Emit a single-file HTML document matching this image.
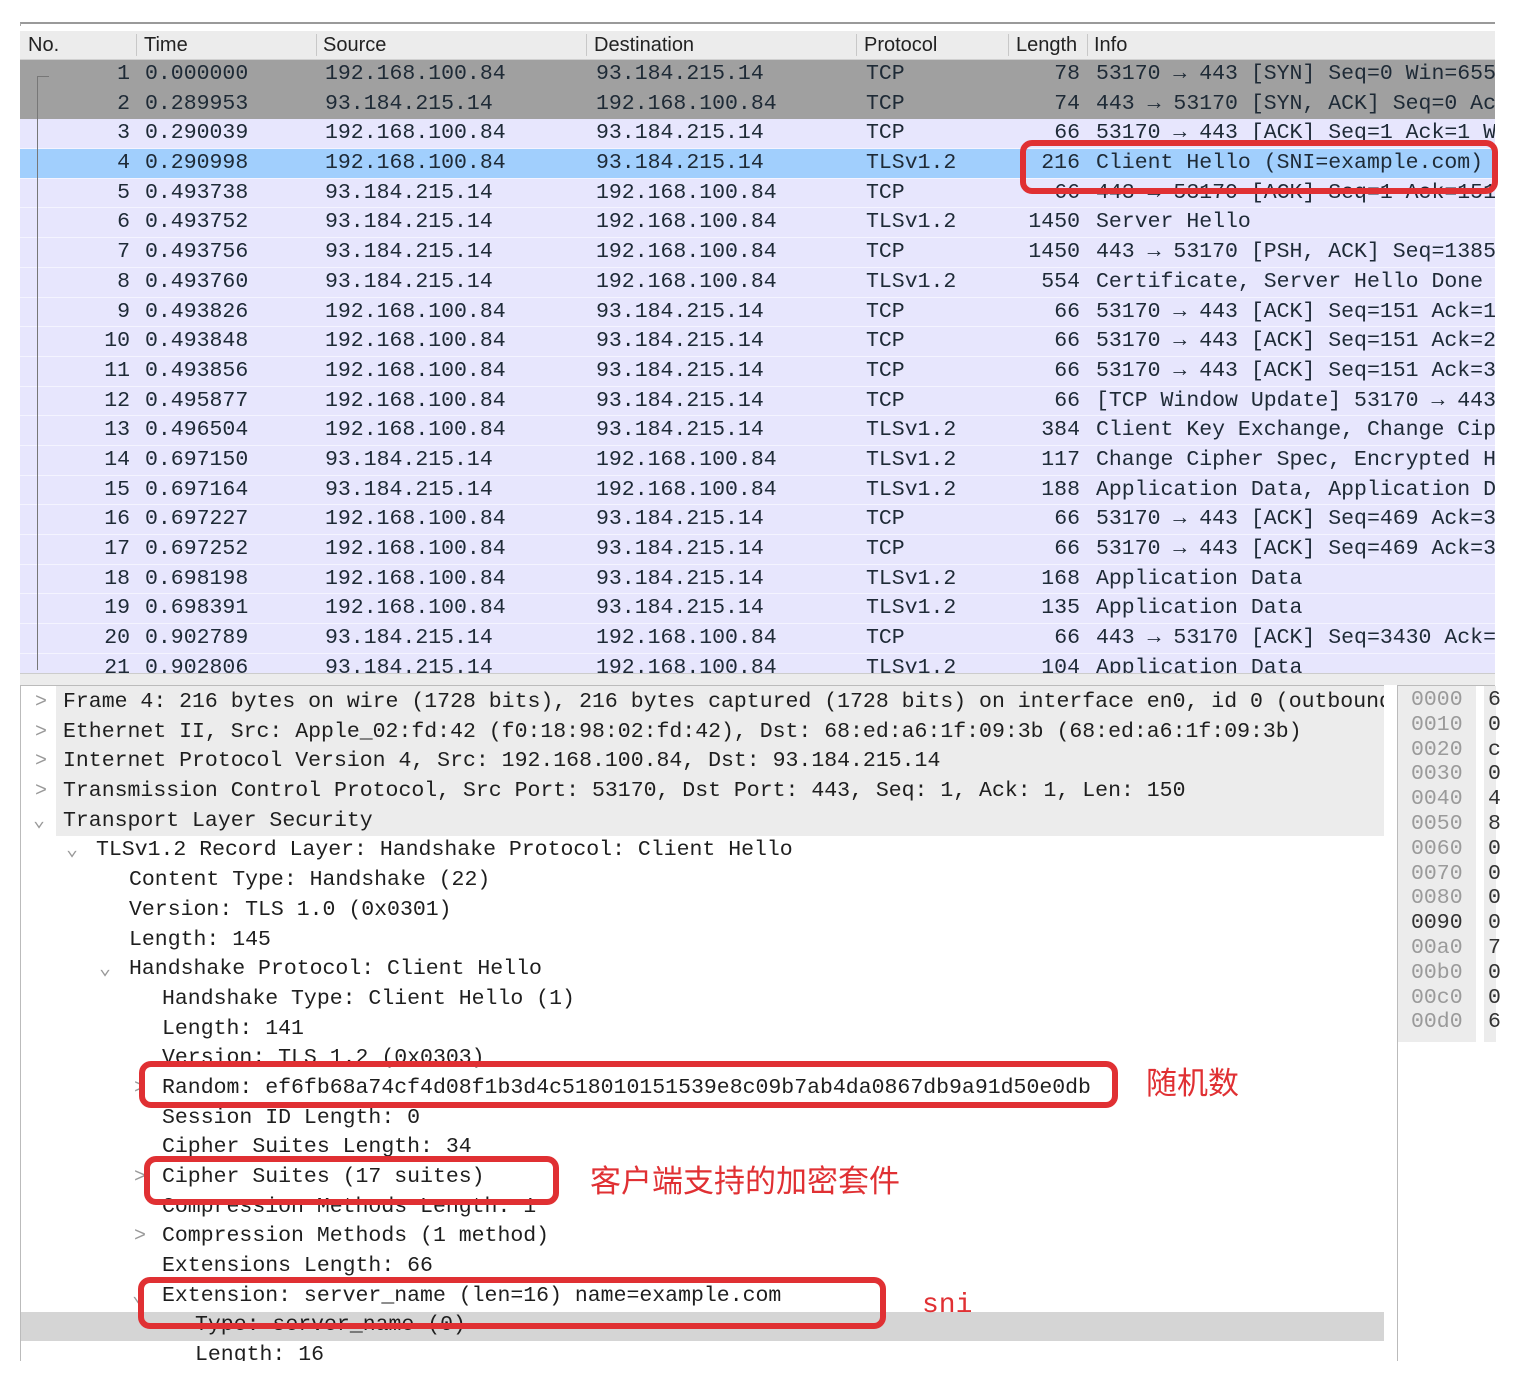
<!DOCTYPE html>
<html><head><meta charset="utf-8"><style>
*{margin:0;padding:0;box-sizing:border-box}
body{width:1516px;height:1382px;background:#fff;position:relative;overflow:hidden;font-family:"Liberation Mono","DejaVu Sans Mono",monospace;color:#1e2a36}
.top{position:absolute;left:20px;top:22px;width:1475px;height:4px;border-top:2px solid #9a9a9a;border-left:1px solid #aaa}
.hdr{position:absolute;left:20px;top:31px;width:1475px;height:29px;background:#ececec;font-family:"Liberation Sans",sans-serif;font-size:20px;color:#222;border-bottom:1px solid #d0d0d0}
.hdr span{position:absolute;top:3px}
.hdr i{position:absolute;top:3px;width:1px;height:22px;background:#c8c8c8}
.list{position:absolute;left:20px;top:60px;width:1475px;height:613px;overflow:hidden;font-size:21.5px}
.r{position:relative;height:29.7px;line-height:29.7px;white-space:pre;background:#e7e6fd;border-bottom:1px solid #f4f4ff}
.r.g{background:#a0a0a0;border-bottom:none}
.r.s{background:#a1cffd}
.r span{position:absolute;top:0}
.c0{left:0;width:110px;text-align:right}
.c1{left:125px}.c2{left:305px}.c3{left:576px}.c4{left:846px}
.c5{left:990px;width:70px;text-align:right}.c6{left:1076px}
.vline{position:absolute;left:37px;top:76px;width:1px;height:594px;background:#777}
.vtick{position:absolute;left:37px;top:76px;width:12px;height:1px;background:#777}
.sep{position:absolute;left:20px;top:673px;width:1475px;height:12px;background:#ececec;border-top:1px solid #ccc}
.det{position:absolute;left:20px;top:685px;width:1364px;height:676px;border-left:1px solid #bbb;border-top:1px solid #bbb;overflow:hidden;font-size:21.5px}
.rows{position:absolute;left:0;top:2px;width:100%}
.greybg{position:absolute;left:35px;top:0;width:1329px;height:150px;background:#ececec}
.selbg{position:absolute;left:0;top:626px;width:1364px;height:29px;background:#d5d5d5}
.d{position:relative;height:29.7px;line-height:29.7px;white-space:pre;color:#1e1e1e}
.d b{position:absolute;top:0;font-weight:normal;color:#999;font-size:20px}
.hex{position:absolute;left:1397px;top:685px;width:98px;height:676px;border-left:1px solid #bbb;border-top:1px solid #bbb;font-size:21.5px}
.hex .off{position:absolute;left:0;top:0;width:78px;height:356px;background:#ececec}
.hex .val{position:absolute;left:86px;top:0;width:12px;height:356px;background:#ececec}
.hex div.l{position:relative;height:24.8px;line-height:24.8px;color:#9a9a9a;padding-left:13px;white-space:pre}
.hex div.l span{position:absolute;left:90px;color:#333}
.box{position:absolute;border:6px solid #e03033;border-radius:12px}
.ann{position:absolute;color:#e03033;font-family:"Liberation Sans","Noto Sans CJK SC",sans-serif;font-size:31px;line-height:1}
</style></head><body>
<div class="top"></div>
<div class="hdr">
<span style="left:8px">No.</span><i style="left:116px"></i>
<span style="left:124px">Time</span><i style="left:296px"></i>
<span style="left:303px">Source</span><i style="left:566px"></i>
<span style="left:574px">Destination</span><i style="left:836px"></i>
<span style="left:844px">Protocol</span><i style="left:988px"></i>
<span style="left:996px;width:64px;overflow:hidden;white-space:nowrap">Length</span><i style="left:1067px"></i>
<span style="left:1074px">Info</span>
</div>
<div class="list">
<div class="r g"><span class="c0">1</span><span class="c1">0.000000</span><span class="c2">192.168.100.84</span><span class="c3">93.184.215.14</span><span class="c4">TCP</span><span class="c5">78</span><span class="c6">53170 → 443 [SYN] Seq=0 Win=65535</span></div>
<div class="r g"><span class="c0">2</span><span class="c1">0.289953</span><span class="c2">93.184.215.14</span><span class="c3">192.168.100.84</span><span class="c4">TCP</span><span class="c5">74</span><span class="c6">443 → 53170 [SYN, ACK] Seq=0 Ack=1</span></div>
<div class="r"><span class="c0">3</span><span class="c1">0.290039</span><span class="c2">192.168.100.84</span><span class="c3">93.184.215.14</span><span class="c4">TCP</span><span class="c5">66</span><span class="c6">53170 → 443 [ACK] Seq=1 Ack=1 Win</span></div>
<div class="r s"><span class="c0">4</span><span class="c1">0.290998</span><span class="c2">192.168.100.84</span><span class="c3">93.184.215.14</span><span class="c4">TLSv1.2</span><span class="c5">216</span><span class="c6">Client Hello (SNI=example.com)</span></div>
<div class="r"><span class="c0">5</span><span class="c1">0.493738</span><span class="c2">93.184.215.14</span><span class="c3">192.168.100.84</span><span class="c4">TCP</span><span class="c5">66</span><span class="c6">443 → 53170 [ACK] Seq=1 Ack=151</span></div>
<div class="r"><span class="c0">6</span><span class="c1">0.493752</span><span class="c2">93.184.215.14</span><span class="c3">192.168.100.84</span><span class="c4">TLSv1.2</span><span class="c5">1450</span><span class="c6">Server Hello</span></div>
<div class="r"><span class="c0">7</span><span class="c1">0.493756</span><span class="c2">93.184.215.14</span><span class="c3">192.168.100.84</span><span class="c4">TCP</span><span class="c5">1450</span><span class="c6">443 → 53170 [PSH, ACK] Seq=1385</span></div>
<div class="r"><span class="c0">8</span><span class="c1">0.493760</span><span class="c2">93.184.215.14</span><span class="c3">192.168.100.84</span><span class="c4">TLSv1.2</span><span class="c5">554</span><span class="c6">Certificate, Server Hello Done</span></div>
<div class="r"><span class="c0">9</span><span class="c1">0.493826</span><span class="c2">192.168.100.84</span><span class="c3">93.184.215.14</span><span class="c4">TCP</span><span class="c5">66</span><span class="c6">53170 → 443 [ACK] Seq=151 Ack=1</span></div>
<div class="r"><span class="c0">10</span><span class="c1">0.493848</span><span class="c2">192.168.100.84</span><span class="c3">93.184.215.14</span><span class="c4">TCP</span><span class="c5">66</span><span class="c6">53170 → 443 [ACK] Seq=151 Ack=2</span></div>
<div class="r"><span class="c0">11</span><span class="c1">0.493856</span><span class="c2">192.168.100.84</span><span class="c3">93.184.215.14</span><span class="c4">TCP</span><span class="c5">66</span><span class="c6">53170 → 443 [ACK] Seq=151 Ack=3</span></div>
<div class="r"><span class="c0">12</span><span class="c1">0.495877</span><span class="c2">192.168.100.84</span><span class="c3">93.184.215.14</span><span class="c4">TCP</span><span class="c5">66</span><span class="c6">[TCP Window Update] 53170 → 443</span></div>
<div class="r"><span class="c0">13</span><span class="c1">0.496504</span><span class="c2">192.168.100.84</span><span class="c3">93.184.215.14</span><span class="c4">TLSv1.2</span><span class="c5">384</span><span class="c6">Client Key Exchange, Change Cip</span></div>
<div class="r"><span class="c0">14</span><span class="c1">0.697150</span><span class="c2">93.184.215.14</span><span class="c3">192.168.100.84</span><span class="c4">TLSv1.2</span><span class="c5">117</span><span class="c6">Change Cipher Spec, Encrypted H</span></div>
<div class="r"><span class="c0">15</span><span class="c1">0.697164</span><span class="c2">93.184.215.14</span><span class="c3">192.168.100.84</span><span class="c4">TLSv1.2</span><span class="c5">188</span><span class="c6">Application Data, Application D</span></div>
<div class="r"><span class="c0">16</span><span class="c1">0.697227</span><span class="c2">192.168.100.84</span><span class="c3">93.184.215.14</span><span class="c4">TCP</span><span class="c5">66</span><span class="c6">53170 → 443 [ACK] Seq=469 Ack=3</span></div>
<div class="r"><span class="c0">17</span><span class="c1">0.697252</span><span class="c2">192.168.100.84</span><span class="c3">93.184.215.14</span><span class="c4">TCP</span><span class="c5">66</span><span class="c6">53170 → 443 [ACK] Seq=469 Ack=3</span></div>
<div class="r"><span class="c0">18</span><span class="c1">0.698198</span><span class="c2">192.168.100.84</span><span class="c3">93.184.215.14</span><span class="c4">TLSv1.2</span><span class="c5">168</span><span class="c6">Application Data</span></div>
<div class="r"><span class="c0">19</span><span class="c1">0.698391</span><span class="c2">192.168.100.84</span><span class="c3">93.184.215.14</span><span class="c4">TLSv1.2</span><span class="c5">135</span><span class="c6">Application Data</span></div>
<div class="r"><span class="c0">20</span><span class="c1">0.902789</span><span class="c2">93.184.215.14</span><span class="c3">192.168.100.84</span><span class="c4">TCP</span><span class="c5">66</span><span class="c6">443 → 53170 [ACK] Seq=3430 Ack=</span></div>
<div class="r"><span class="c0">21</span><span class="c1">0.902806</span><span class="c2">93.184.215.14</span><span class="c3">192.168.100.84</span><span class="c4">TLSv1.2</span><span class="c5">104</span><span class="c6">Application Data</span></div>
</div>
<div class="vline"></div><div class="vtick"></div>
<div class="sep"></div>
<div class="det">
<div class="greybg"></div>
<div class="selbg"></div>
<div class="rows">
<div class="d"><b style="left:14px">&gt;</b><span style="position:absolute;left:42px">Frame 4: 216 bytes on wire (1728 bits), 216 bytes captured (1728 bits) on interface en0, id 0 (outbound)</span></div>
<div class="d"><b style="left:14px">&gt;</b><span style="position:absolute;left:42px">Ethernet II, Src: Apple_02:fd:42 (f0:18:98:02:fd:42), Dst: 68:ed:a6:1f:09:3b (68:ed:a6:1f:09:3b)</span></div>
<div class="d"><b style="left:14px">&gt;</b><span style="position:absolute;left:42px">Internet Protocol Version 4, Src: 192.168.100.84, Dst: 93.184.215.14</span></div>
<div class="d"><b style="left:14px">&gt;</b><span style="position:absolute;left:42px">Transmission Control Protocol, Src Port: 53170, Dst Port: 443, Seq: 1, Ack: 1, Len: 150</span></div>
<div class="d"><b style="left:12px">⌄</b><span style="position:absolute;left:42px">Transport Layer Security</span></div>
<div class="d"><b style="left:45px">⌄</b><span style="position:absolute;left:75px">TLSv1.2 Record Layer: Handshake Protocol: Client Hello</span></div>
<div class="d"><span style="position:absolute;left:108px">Content Type: Handshake (22)</span></div>
<div class="d"><span style="position:absolute;left:108px">Version: TLS 1.0 (0x0301)</span></div>
<div class="d"><span style="position:absolute;left:108px">Length: 145</span></div>
<div class="d"><b style="left:78px">⌄</b><span style="position:absolute;left:108px">Handshake Protocol: Client Hello</span></div>
<div class="d"><span style="position:absolute;left:141px">Handshake Type: Client Hello (1)</span></div>
<div class="d"><span style="position:absolute;left:141px">Length: 141</span></div>
<div class="d"><span style="position:absolute;left:141px">Version: TLS 1.2 (0x0303)</span></div>
<div class="d"><b style="left:113px">&gt;</b><span style="position:absolute;left:141px">Random: ef6fb68a74cf4d08f1b3d4c518010151539e8c09b7ab4da0867db9a91d50e0db</span></div>
<div class="d"><span style="position:absolute;left:141px">Session ID Length: 0</span></div>
<div class="d"><span style="position:absolute;left:141px">Cipher Suites Length: 34</span></div>
<div class="d"><b style="left:113px">&gt;</b><span style="position:absolute;left:141px">Cipher Suites (17 suites)</span></div>
<div class="d"><span style="position:absolute;left:141px">Compression Methods Length: 1</span></div>
<div class="d"><b style="left:113px">&gt;</b><span style="position:absolute;left:141px">Compression Methods (1 method)</span></div>
<div class="d"><span style="position:absolute;left:141px">Extensions Length: 66</span></div>
<div class="d"><b style="left:111px">⌄</b><span style="position:absolute;left:141px">Extension: server_name (len=16) name=example.com</span></div>
<div class="d"><span style="position:absolute;left:174px">Type: server_name (0)</span></div>
<div class="d"><span style="position:absolute;left:174px">Length: 16</span></div>
</div>
</div>
<div class="hex">
<div class="off"></div><div class="val"></div>
<div style="position:absolute;left:0;top:2px;width:98px">
<div class="l">0000<span>6</span></div><div class="l">0010<span>0</span></div><div class="l">0020<span>c</span></div><div class="l">0030<span>0</span></div><div class="l">0040<span>4</span></div><div class="l">0050<span>8</span></div><div class="l">0060<span>0</span></div><div class="l">0070<span>0</span></div><div class="l">0080<span>0</span></div><div class="l" style="color:#333">0090<span>0</span></div><div class="l">00a0<span>7</span></div><div class="l">00b0<span>0</span></div><div class="l">00c0<span>0</span></div><div class="l">00d0<span>6</span></div>
</div>
</div>
<div class="box" style="left:1020px;top:140px;width:478px;height:54px"></div>
<div class="box" style="left:139px;top:1061px;width:979px;height:47px"></div>
<div class="box" style="left:144px;top:1156px;width:415px;height:49px"></div>
<div class="box" style="left:138px;top:1277px;width:748px;height:52px"></div>
<div class="ann" style="left:1146px;top:1068px">随机数</div>
<div class="ann" style="left:590px;top:1166px">客户端支持的加密套件</div>
<div class="ann" style="left:922px;top:1292px;font-family:'Liberation Mono',monospace;font-size:28px">sni</div>
</body></html>
